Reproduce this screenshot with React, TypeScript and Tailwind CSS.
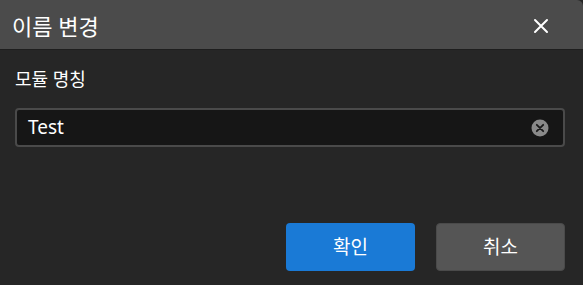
import React from "react";

export default function App() {
  return (
    <div
      className="w-[583px] h-[285px] bg-[#262626] flex flex-col overflow-hidden"
      style={{ fontFamily: '"Noto Sans", "Noto Sans CJK KR", sans-serif' }}
    >
      <div className="h-[50px] bg-[#4b4b4b] rounded-tr-[6px] border-b border-[#1e1e1e] flex items-center justify-between pl-[12px] pr-[34px] pt-[3px]">
        <span className="text-[22px] text-white leading-none">이름 변경</span>
        <svg width="16" height="16" viewBox="0 0 16 16">
          <path d="M2 2 L14 14 M14 2 L2 14" stroke="#ffffff" strokeWidth="2" strokeLinecap="round" />
        </svg>
      </div>
      <div className="flex flex-col px-[15px] pt-[16px] flex-1">
        <span className="text-[18px] text-white leading-[26px]">모듈 명칭</span>
        <div className="mt-[16px] w-[550px] h-[39px] bg-[#161616] border-2 border-[#4a4a4a] rounded-[4px] flex items-center justify-between pl-[11px] pr-[14px]">
          <span className="text-[19px] text-white leading-none">Test</span>
          <svg width="18" height="18" viewBox="0 0 18 18">
            <circle cx="9" cy="9" r="8.5" fill="#8a8a8a" />
            <path d="M5.8 5.8 L12.2 12.2 M12.2 5.8 L5.8 12.2" stroke="#1a1a1a" strokeWidth="1.8" strokeLinecap="round" />
          </svg>
        </div>
        <div className="flex justify-end gap-[21px] mt-[76px] pr-[3px]">
          <button className="w-[129px] h-[48px] bg-[#1a7ad6] rounded-[4px] text-white text-[19px] flex items-center justify-center">
            확인
          </button>
          <button className="w-[129px] h-[48px] bg-[#555555] border border-[#4a4a4a] rounded-[4px] text-white text-[19px] flex items-center justify-center">
            취소
          </button>
        </div>
      </div>
    </div>
  );
}
